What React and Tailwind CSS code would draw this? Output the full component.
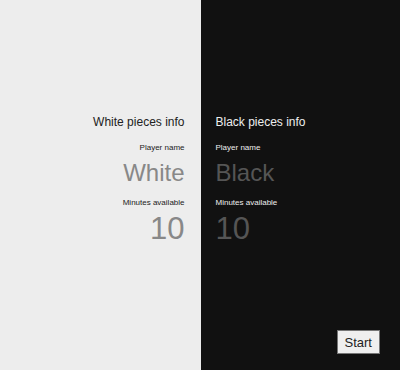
import React, { useState } from 'react';

const Side = ({ title, dark, name, setName, minutes, setMinutes, placeholder }) => {
  const align = dark ? 'text-left' : 'text-right';
  return (
    <div className={`flex-1 flex flex-col pt-[114px] ${dark ? 'bg-[#111111] pl-[15px] items-start' : 'bg-[#ededed] pr-[16px] items-end'}`}>
      <h2 className={`text-[12px] leading-[16px] ${dark ? 'text-[#eeeeee]' : 'text-[#222222]'}`}>{title}</h2>
      <label className={`mt-[13px] text-[8px] leading-[10px] ${dark ? 'text-[#eeeeee]' : 'text-[#222222]'}`}>Player name</label>
      <input
        className={`w-[170px] bg-transparent outline-none text-[24px] leading-[28px] mt-[6px] ${align} ${dark ? 'text-[#cccccc] placeholder:text-[#555555]' : 'text-[#333333] placeholder:text-[#888888]'}`}
        placeholder={placeholder}
        value={name}
        onChange={e => setName(e.target.value)}
      />
      <label className={`mt-[11px] text-[8px] leading-[10px] ${dark ? 'text-[#eeeeee]' : 'text-[#222222]'}`}>Minutes available</label>
      <input
        className={`w-[170px] bg-transparent outline-none text-[31px] leading-[36px] mt-[3px] ${align} ${dark ? 'text-[#cccccc] placeholder:text-[#555555]' : 'text-[#333333] placeholder:text-[#888888]'}`}
        placeholder="10"
        value={minutes}
        onChange={e => setMinutes(e.target.value)}
      />
    </div>
  );
};

export default function App() {
  const [white, setWhite] = useState('');
  const [black, setBlack] = useState('');
  const [wMin, setWMin] = useState('');
  const [bMin, setBMin] = useState('');

  return (
    <div className="relative flex w-[400px] h-[370px] font-['Liberation_Sans',Arial,sans-serif]">
      <Side title="White pieces info" name={white} setName={setWhite} minutes={wMin} setMinutes={setWMin} placeholder="White" />
      <Side title="Black pieces info" dark name={black} setName={setBlack} minutes={bMin} setMinutes={setBMin} placeholder="Black" />
      <button className="absolute right-[20px] bottom-[16px] h-[24px] px-[7px] bg-[#efefef] border border-[#767676] text-[13px] text-[#222222] leading-none">
        Start
      </button>
    </div>
  );
}
